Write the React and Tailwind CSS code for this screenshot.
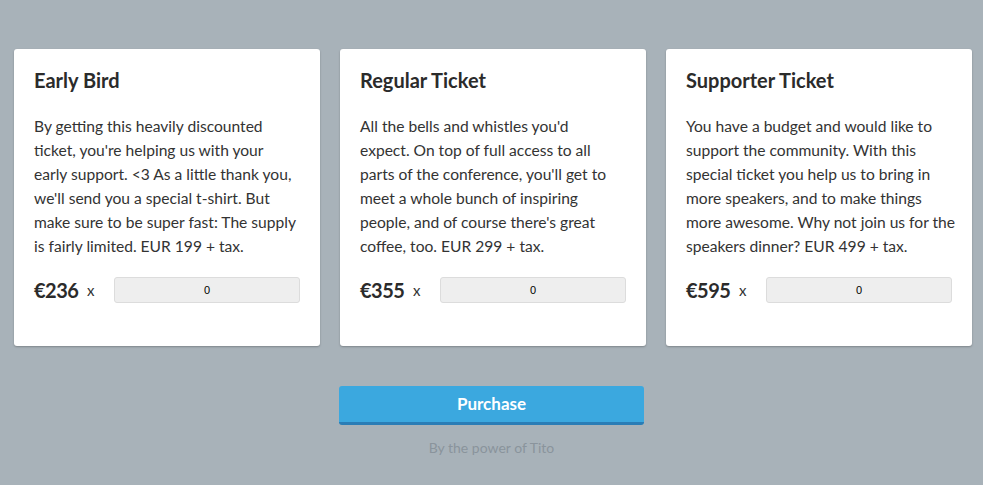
import React, { useState } from "react";

const tickets = [
  {
    name: "Early Bird",
    lines: [
      "By getting this heavily discounted",
      "ticket, you're helping us with your",
      "early support. <3 As a little thank you,",
      "we'll send you a special t-shirt. But",
      "make sure to be super fast: The supply",
      "is fairly limited. EUR 199 + tax.",
    ],
    price: "€236",
  },
  {
    name: "Regular Ticket",
    lines: [
      "All the bells and whistles you'd",
      "expect. On top of full access to all",
      "parts of the conference, you'll get to",
      "meet a whole bunch of inspiring",
      "people, and of course there's great",
      "coffee, too. EUR 299 + tax.",
    ],
    price: "€355",
  },
  {
    name: "Supporter Ticket",
    lines: [
      "You have a budget and would like to",
      "support the community. With this",
      "special ticket you help us to bring in",
      "more speakers, and to make things",
      "more awesome. Why not join us for the",
      "speakers dinner? EUR 499 + tax.",
    ],
    price: "€595",
  },
];

const TicketCard = ({ ticket }) => {
  const [qty, setQty] = useState("0");
  return (
    <div className="flex flex-col bg-white rounded-[3px] shadow-[0_1px_2px_rgba(0,0,0,0.25)] px-5 pt-[19px] pb-[43px] h-[297px]">
      <h2 className="text-[20px] leading-[24px] font-bold text-[#2b2b2b]">{ticket.name}</h2>
      <p className="mt-[22px] text-[15.6px] leading-[24px] text-[#333]">
        {ticket.lines.map((l, i) => (
          <span key={i} className="block whitespace-nowrap">
            {l}
          </span>
        ))}
      </p>
      <div className="mt-auto flex items-center h-[26px]">
        <span className="w-[53px] text-[20px] font-bold text-[#2b2b2b] tracking-[-0.5px]">{ticket.price}</span>
        <span className="w-[27px] text-[15px] text-[#333]">x</span>
        <input
          value={qty}
          onChange={(e) => setQty(e.target.value)}
          className="flex-1 h-[26px] bg-[#eeeeee] border border-[#dcdcdc] rounded-[3px] text-center text-[11px] text-black outline-none"
          style={{ fontFamily: "'Liberation Sans', Arial, sans-serif" }}
        />
      </div>
    </div>
  );
};

export default function App() {
  return (
    <div
      className="min-h-screen bg-[#a8b2b9] pt-[49px] pl-[14px] pr-[11px]"
      style={{ fontFamily: "Lato, 'Noto Sans', sans-serif" }}
    >
      <div className="grid grid-cols-3 gap-5">
        {tickets.map((t) => (
          <TicketCard key={t.name} ticket={t} />
        ))}
      </div>
      <div className="flex flex-col items-center mt-10 -ml-[3px]">
        <button className="w-[305px] h-[39px] bg-[#3ba8df] border-b-[3px] border-[#2a7db6] rounded-[3px] text-white text-[17px] font-bold">
          Purchase
        </button>
        <div className="mt-[12px] text-[14px] text-[#8a949c]">By the power of Tito</div>
      </div>
    </div>
  );
}
